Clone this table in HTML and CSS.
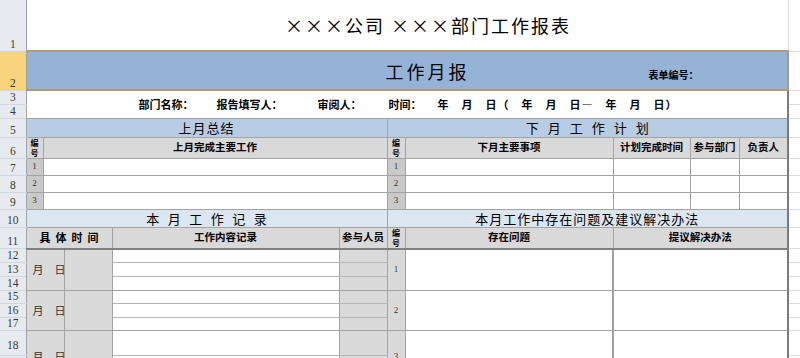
FILE: index.html
```html
<!DOCTYPE html>
<html lang="zh-CN">
<head>
<meta charset="utf-8">
<title>工作报表</title>
<link rel="stylesheet" href="styles.css">
</head>
<body>
<table class="sheet">
<colgroup>
<col class="w-rh"><col class="w1"><col class="w2"><col class="w3"><col class="w4"><col class="w5"><col class="w6"><col class="w7"><col class="w8"><col class="w9"><col class="w10"><col class="w11">
</colgroup>
<tbody>
<tr class="r1"><th class="rh">1</th><td colspan="10" class="title">×××公司 ×××部门工作报表</td><td class="pad pad-top"></td></tr>
<tr class="r2"><th class="rh sel">2</th><td colspan="10" class="banner"><div class="banner-in"><span class="big">工作月报</span><span class="formno">表单编号：</span></div></td><td class="pad"></td></tr>
<tr class="r3"><th class="rh">3</th><td colspan="10" rowspan="2" class="info re"><div class="info-in"><span>部门名称：</span><span>报告填写人：</span><span>审阅人：</span><span>时间：</span><span class="date">年　月　日（　年　月　日—　年　月　日）</span></div></td><td class="pad"></td></tr>
<tr class="r4"><th class="rh">4</th><td class="pad"></td></tr>
<tr class="r5"><th class="rh">5</th><td colspan="5" class="sec">上月总结</td><td colspan="5" class="sec re wide">下月工作计划</td><td class="pad"></td></tr>
<tr class="r6"><th class="rh">6</th><td class="hd no">编<br>号</td><td colspan="4" class="hd">上月完成主要工作</td><td class="hd no">编<br>号</td><td class="hd">下月主要事项</td><td class="hd">计划完成时间</td><td class="hd">参与部门</td><td class="hd re">负责人</td><td class="pad"></td></tr>
<tr class="r7"><th class="rh">7</th><td class="num">1</td><td colspan="4"></td><td class="num">1</td><td></td><td></td><td></td><td class="re"></td><td class="pad"></td></tr>
<tr class="r8"><th class="rh">8</th><td class="num">2</td><td colspan="4"></td><td class="num">2</td><td></td><td></td><td></td><td class="re"></td><td class="pad"></td></tr>
<tr class="r9"><th class="rh">9</th><td class="num">3</td><td colspan="4"></td><td class="num">3</td><td></td><td></td><td></td><td class="re"></td><td class="pad"></td></tr>
<tr class="r10"><th class="rh">10</th><td colspan="5" class="sec2 wide2">本月工作记录</td><td colspan="5" class="sec2 re">本月工作中存在问题及建议解决办法</td><td class="pad"></td></tr>
<tr class="r11"><th class="rh">11</th><td colspan="3" class="hd bb spaced">具体时间</td><td class="hd bb">工作内容记录</td><td class="hd bb">参与人员</td><td class="hd bb no">编<br>号</td><td class="hd bb">存在问题</td><td colspan="3" class="hd bb re">提议解决办法</td><td class="pad"></td></tr>
<tr class="r12"><th class="rh">12</th><td colspan="2" rowspan="3" class="gd md">月　日</td><td rowspan="3" class="gd"></td><td class="ln"></td><td class="gd ln"></td><td rowspan="3" class="gd bn">1</td><td rowspan="3" class="vl"></td><td colspan="3" rowspan="3" class="re"></td><td class="pad"></td></tr>
<tr class="r13"><th class="rh">13</th><td class="ln"></td><td class="gd ln"></td><td class="pad"></td></tr>
<tr class="r14"><th class="rh">14</th><td></td><td class="gd"></td><td class="pad"></td></tr>
<tr class="r15"><th class="rh">15</th><td colspan="2" rowspan="3" class="gd md">月　日</td><td rowspan="3" class="gd"></td><td class="ln"></td><td class="gd ln"></td><td rowspan="3" class="gd bn">2</td><td rowspan="3" class="vl"></td><td colspan="3" rowspan="3" class="re"></td><td class="pad"></td></tr>
<tr class="r16"><th class="rh">16</th><td class="ln"></td><td class="gd ln"></td><td class="pad"></td></tr>
<tr class="r17"><th class="rh">17</th><td></td><td class="gd"></td><td class="pad"></td></tr>
<tr class="r18"><th class="rh lift">18</th><td colspan="2" rowspan="2" class="gd md">月　日</td><td rowspan="2" class="gd"></td><td class="ln"></td><td class="gd ln"></td><td rowspan="2" class="gd bn">3</td><td rowspan="2" class="vl"></td><td colspan="3" rowspan="2" class="re"></td><td class="pad"></td></tr>
<tr class="r19"><th class="rh"></th><td></td><td class="gd"></td><td class="pad"></td></tr>
</tbody>
</table>
</body>
</html>
```

FILE: styles.css
```css
html, body {
  margin: 0;
  padding: 0;
  background: #ffffff;
}

body {
  width: 800px;
  height: 358px;
  overflow: hidden;
  font-family: "Noto Sans CJK SC", "Noto Sans", sans-serif;
  color: #000;
}

.sheet {
  border-collapse: collapse;
  table-layout: fixed;
  width: 800px;
}

.sheet td,
.sheet th {
  padding: 0;
  border: 1px solid #a3a3a3;
  overflow: hidden;
  white-space: nowrap;
  text-align: center;
  vertical-align: middle;
  line-height: 1;
  font-weight: normal;
  background: #ffffff;
}

col.w-rh { width: 26px; }
col.w1 { width: 17px; }
col.w2 { width: 21px; }
col.w3 { width: 48px; }
col.w4 { width: 227px; }
col.w5 { width: 48px; }
col.w6 { width: 18px; }
col.w7 { width: 208px; }
col.w8 { width: 77px; }
col.w9 { width: 49px; }
col.w10 { width: 49px; }
col.w11 { width: 12px; }

tr.r1 { height: 51px; }
tr.r2 { height: 39px; }
tr.r3 { height: 14px; }
tr.r4 { height: 14px; }
tr.r5 { height: 19px; }
tr.r6 { height: 21px; }
tr.r7 { height: 17px; }
tr.r8 { height: 17px; }
tr.r9 { height: 17px; }
tr.r10 { height: 18px; }
tr.r11 { height: 21px; }
tr.r12 { height: 14px; }
tr.r13 { height: 14px; }
tr.r14 { height: 14px; }
tr.r15 { height: 13px; }
tr.r16 { height: 14px; }
tr.r17 { height: 13px; }
tr.r18 { height: 25px; }
tr.r19 { height: 27px; }

/* row headers */
.sheet th.rh {
  background: #e7ebf0;
  border: none;
  border-right: 1px solid #9ba5b0;
  border-bottom: 1px solid #d0d6dd;
  color: #3a3a3a;
  font-family: "Liberation Serif", serif;
  font-size: 11.5px;
  line-height: 11px;
  vertical-align: bottom;
  padding-bottom: 1px;
}

.sheet th.rh.lift {
  padding-bottom: 4px;
}

.sheet th.rh.sel {
  background: #f8d57c;
  color: #333;
}

/* filler column to the right */
.sheet td.pad {
  border: none;
  border-bottom: 1px solid #dcdee1;
}

.sheet td.pad-top {
  border-left: 1px solid #dcdee1;
}

/* title row */
.sheet td.title {
  border: none;
  font-size: 18px;
  letter-spacing: 2px;
  padding-left: 42px;
}

/* blue banner row */
.sheet td.banner {
  background: #95b3d7;
  border-top: 2px solid #ad9a80;
  border-bottom: 2px solid #ad9a80;
  border-right: 2px solid #ad9a80;
  text-align: left;
}

.banner-in {
  display: flex;
  align-items: baseline;
  padding-left: 359px;
}

.big {
  font-size: 18px;
  letter-spacing: 3px;
}

.formno {
  font-size: 10px;
  font-weight: bold;
  margin-left: 179px;
}

/* info row */
.sheet td.info {
  text-align: left;
  font-size: 11px;
  font-weight: bold;
}

.info-in {
  display: grid;
  grid-template-columns: 78px 101px 71px 49px auto;
  padding-left: 112px;
  align-items: center;
}

.date {
  letter-spacing: 1px;
}

/* section title rows */
.sheet td.sec {
  background: #b8cce4;
  font-size: 13px;
  letter-spacing: 1px;
}

.sheet td.sec.wide {
  letter-spacing: 9px;
  padding-left: 9px;
}

.sheet td.sec2 {
  background: #dce6f1;
  font-size: 13px;
  letter-spacing: 1px;
}

.sheet td.sec2.wide2 {
  letter-spacing: 8.5px;
  padding-left: 8.5px;
}

/* grey header cells */
.sheet td.hd {
  background: #d9d9d9;
  font-weight: bold;
  font-size: 10.5px;
}

.sheet td.no {
  font-size: 8px;
  line-height: 10px;
}

.sheet td.spaced {
  font-size: 11px;
  letter-spacing: 5px;
  padding-left: 5px;
}

.sheet td.bb {
  border-bottom: 2px solid #808080;
}

.sheet td.num {
  background: #c9c9c9;
  font-family: "Liberation Serif", serif;
  font-size: 9px;
  color: #333;
}

.sheet td.gd {
  background: #dadada;
}

.sheet td.bn {
  font-family: "Liberation Serif", serif;
  font-size: 9px;
  color: #333;
}

.sheet td.md {
  font-size: 11px;
  color: #333;
  text-align: left;
  padding-left: 6px;
}

.sheet td.ln {
  border-bottom: 1px solid #b4b4b4;
}

.sheet td.vl {
  border-right: 2px solid #a0a0a0;
}

.sheet td.re {
  border-right: 2px solid #7b7b7b;
}
```
